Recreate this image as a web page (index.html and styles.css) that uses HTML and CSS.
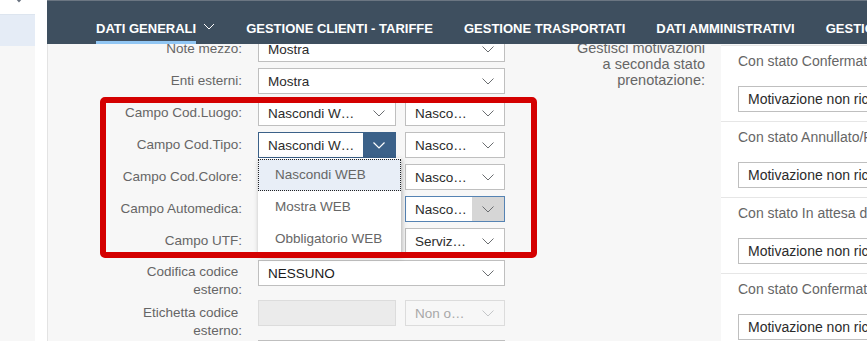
FILE: index.html
```html
<!DOCTYPE html>
<html lang="it">
<head>
<meta charset="utf-8">
<title>Dati generali</title>
<link rel="stylesheet" href="styles.css">
</head>
<body>
<div class="app">
  <aside class="side">
    <div class="side-top">
      <svg class="side-glyph" width="8" height="3" viewBox="0 0 8 3"><polyline points="1,-2 4,1.5 7,-2" fill="none" stroke="#6a7380" stroke-width="1.4"/></svg>
    </div>
    <div class="side-sel"></div>
  </aside>
  <div class="gutter"></div>
  <main class="main">
    <nav class="tabs">
      <div class="tab active">
        <span class="tab-label">DATI GENERALI</span>
        <svg class="tab-chev" width="12" height="7" viewBox="0 0 12 7"><polyline points="1,1 6,6 11,1" fill="none" stroke="#fff" stroke-width="1"/></svg>
      </div>
      <div class="tab"><span class="tab-label">GESTIONE CLIENTI - TARIFFE</span></div>
      <div class="tab"><span class="tab-label">GESTIONE TRASPORTATI</span></div>
      <div class="tab"><span class="tab-label">DATI AMMINISTRATIVI</span></div>
      <div class="tab"><span class="tab-label">GESTIONE</span></div>
    </nav>
    <section class="content">
      <div class="inner">
        <div class="form-left">
          <div class="row">
            <div class="label">Note mezzo:</div>
            <div class="fields">
              <div class="sel full"><span class="val">Mostra</span><span class="btn"><svg width="12" height="7" viewBox="0 0 12 7"><polyline points="0.5,0.5 6,6 11.5,0.5" fill="none" stroke="#6a6d70" stroke-width="1"/></svg></span></div>
            </div>
          </div>
          <div class="row">
            <div class="label">Enti esterni:</div>
            <div class="fields">
              <div class="sel full"><span class="val">Mostra</span><span class="btn"><svg width="12" height="7" viewBox="0 0 12 7"><polyline points="0.5,0.5 6,6 11.5,0.5" fill="none" stroke="#6a6d70" stroke-width="1"/></svg></span></div>
            </div>
          </div>
          <div class="row">
            <div class="label">Campo Cod.Luogo:</div>
            <div class="fields">
              <div class="sel first"><span class="val">Nascondi W…</span><span class="btn"><svg width="12" height="7" viewBox="0 0 12 7"><polyline points="0.5,0.5 6,6 11.5,0.5" fill="none" stroke="#6a6d70" stroke-width="1"/></svg></span></div>
              <div class="sel second"><span class="val">Nasco…</span><span class="btn"><svg width="12" height="7" viewBox="0 0 12 7"><polyline points="0.5,0.5 6,6 11.5,0.5" fill="none" stroke="#6a6d70" stroke-width="1"/></svg></span></div>
            </div>
          </div>
          <div class="row">
            <div class="label">Campo Cod.Tipo:</div>
            <div class="fields">
              <div class="drop">
                <div class="sel first focused"><span class="val">Nascondi W…</span><span class="btn"><svg width="12" height="7" viewBox="0 0 12 7"><polyline points="0.5,0.5 6,6 11.5,0.5" fill="none" stroke="#fff" stroke-width="1.2"/></svg></span></div>
                <ul class="list">
                  <li class="item selected">Nascondi WEB</li>
                  <li class="item">Mostra WEB</li>
                  <li class="item">Obbligatorio WEB</li>
                </ul>
              </div>
              <div class="sel second"><span class="val">Nasco…</span><span class="btn"><svg width="12" height="7" viewBox="0 0 12 7"><polyline points="0.5,0.5 6,6 11.5,0.5" fill="none" stroke="#6a6d70" stroke-width="1"/></svg></span></div>
            </div>
          </div>
          <div class="row">
            <div class="label">Campo Cod.Colore:</div>
            <div class="fields">
              <div class="sel first"><span class="val">Nascondi W…</span><span class="btn"><svg width="12" height="7" viewBox="0 0 12 7"><polyline points="0.5,0.5 6,6 11.5,0.5" fill="none" stroke="#6a6d70" stroke-width="1"/></svg></span></div>
              <div class="sel second"><span class="val">Nasco…</span><span class="btn"><svg width="12" height="7" viewBox="0 0 12 7"><polyline points="0.5,0.5 6,6 11.5,0.5" fill="none" stroke="#6a6d70" stroke-width="1"/></svg></span></div>
            </div>
          </div>
          <div class="row">
            <div class="label">Campo Automedica:</div>
            <div class="fields">
              <div class="sel first"><span class="val">Nascondi W…</span><span class="btn"><svg width="12" height="7" viewBox="0 0 12 7"><polyline points="0.5,0.5 6,6 11.5,0.5" fill="none" stroke="#6a6d70" stroke-width="1"/></svg></span></div>
              <div class="sel second hovered"><span class="val">Nasco…</span><span class="btn"><svg width="12" height="7" viewBox="0 0 12 7"><polyline points="0.5,0.5 6,6 11.5,0.5" fill="none" stroke="#6a6d70" stroke-width="1"/></svg></span></div>
            </div>
          </div>
          <div class="row">
            <div class="label">Campo UTF:</div>
            <div class="fields">
              <div class="sel first"><span class="val">Nascondi W…</span><span class="btn"><svg width="12" height="7" viewBox="0 0 12 7"><polyline points="0.5,0.5 6,6 11.5,0.5" fill="none" stroke="#6a6d70" stroke-width="1"/></svg></span></div>
              <div class="sel second"><span class="val">Serviz…</span><span class="btn"><svg width="12" height="7" viewBox="0 0 12 7"><polyline points="0.5,0.5 6,6 11.5,0.5" fill="none" stroke="#6a6d70" stroke-width="1"/></svg></span></div>
            </div>
          </div>
          <div class="row tall">
            <div class="label two">Codifica codice&nbsp;<br>esterno:</div>
            <div class="fields">
              <div class="sel full"><span class="val strong">NESSUNO</span><span class="btn"><svg width="12" height="7" viewBox="0 0 12 7"><polyline points="0.5,0.5 6,6 11.5,0.5" fill="none" stroke="#6a6d70" stroke-width="1"/></svg></span></div>
            </div>
          </div>
          <div class="row tall">
            <div class="label two b">Etichetta codice&nbsp;<br>esterno:</div>
            <div class="fields">
              <div class="input first disabled"></div>
              <div class="sel second disabled"><span class="val">Non o…</span><span class="btn"><svg width="12" height="7" viewBox="0 0 12 7"><polyline points="0.5,0.5 6,6 11.5,0.5" fill="none" stroke="#c4c6c8" stroke-width="1"/></svg></span></div>
            </div>
          </div>
          <div class="row">
            <div class="label">Descrizione:</div>
            <div class="fields">
              <div class="input full"></div>
            </div>
          </div>
        </div>

        <div class="form-right">
          <div class="r-label">Gestisci motivazioni<br>a seconda stato<br>prenotazione:</div>
          <div class="panel">
            <div class="sect">
              <div class="s-label">Con stato Confermato</div>
              <div class="sel wide"><span class="val">Motivazione non richiesta</span></div>
            </div>
            <div class="sect">
              <div class="s-label">Con stato Annullato/Rifiutato</div>
              <div class="sel wide"><span class="val">Motivazione non richiesta</span></div>
            </div>
            <div class="sect">
              <div class="s-label">Con stato In attesa di conferma</div>
              <div class="sel wide"><span class="val">Motivazione non richiesta</span></div>
            </div>
            <div class="sect">
              <div class="s-label">Con stato Confermato con riserva</div>
              <div class="sel wide"><span class="val">Motivazione non richiesta</span></div>
            </div>
          </div>
        </div>
      </div>
    </section>
  </main>
</div>
<div class="annot"></div>
</body>
</html>
```

FILE: styles.css
```css
html, body {
  margin: 0;
  padding: 0;
}
body {
  width: 867px;
  height: 341px;
  overflow: hidden;
  font-family: "Liberation Sans", Arial, sans-serif;
  font-size: 13.5px;
  background: #fff;
  position: relative;
}
.app {
  display: flex;
  height: 341px;
}
.side {
  width: 35px;
  flex-shrink: 0;
  background: #f7f7f7;
  display: flex;
  flex-direction: column;
}
.side-top {
  height: 14px;
  background: #fff;
}
.side-glyph {
  display: block;
  margin-left: 15px;
}
.side-sel {
  height: 32px;
  background: #e5ecf6;
  box-sizing: border-box;
  border-top: 1px solid #dde5ef;
}
.gutter {
  width: 12px;
  flex-shrink: 0;
  background: #fff;
}
.main {
  flex: 1;
  display: flex;
  flex-direction: column;
  min-width: 0;
}
.tabs {
  height: 44px;
  box-sizing: border-box;
  background: #3e4f5f;
  border-top: 1px solid #6b7682;
  display: flex;
  gap: 31px;
  padding-left: 49px;
  white-space: nowrap;
  overflow: hidden;
  flex-shrink: 0;
}
.tab {
  display: flex;
  align-items: stretch;
  gap: 7px;
  color: #fff;
  font-weight: bold;
  font-size: 13px;
}
.tab-label {
  display: flex;
  align-items: center;
  padding-top: 14px;
  box-sizing: border-box;
  border-bottom: 3px solid transparent;
}
.tab.active .tab-label {
  border-bottom-color: #91c6f3;
}
.tab-chev {
  align-self: center;
  margin-top: 8px;
}
.content {
  flex: 1;
  background: #f7f7f7;
  border-left: 1px solid #e3e3e3;
  overflow: hidden;
}
.inner {
  display: flex;
  margin-top: -8px;
}
.form-left {
  flex-shrink: 0;
  width: 457px;
}
.row {
  display: flex;
  height: 32px;
}
.row.tall {
  height: 40px;
}
.label {
  width: 194px;
  margin-right: 16px;
  flex-shrink: 0;
  text-align: right;
  color: #666;
  line-height: 18px;
  padding-top: 4px;
  box-sizing: border-box;
}
.label.two {
  padding-top: 3px;
}
.label.two.b {
  padding-top: 4px;
}
.fields {
  display: flex;
  gap: 9px;
  width: 247px;
}
.sel, .input {
  display: flex;
  align-items: center;
  height: 26px;
  box-sizing: border-box;
  border: 1px solid #bfbfbf;
  background: #fff;
  color: #2b2b2b;
}
.full { width: 247px; }
.first { width: 138px; }
.second { width: 100px; }
.val {
  flex: 1;
  padding-left: 9px;
  white-space: nowrap;
  overflow: hidden;
}
.val.strong { color: #1a1a1a; }
.btn {
  width: 32px;
  height: 100%;
  display: flex;
  align-items: center;
  justify-content: center;
  flex-shrink: 0;
}
.btn svg { display: block; margin-top: 1px; }
.sel.focused {
  border-color: #3b6189;
}
.sel.focused .btn {
  background: #3b6189;
}
.sel.hovered {
  border-color: #5583b3;
}
.sel.hovered .btn {
  background: #d6d6d6;
}
.disabled {
  background: #ebebeb;
  border-color: #dcdcdc;
}
.sel.disabled {
  background: #f7f7f7;
  color: #a8a8a8;
}
.drop {
  position: relative;
}
.list {
  position: absolute;
  top: 26px;
  left: 0;
  width: 143px;
  margin: 0;
  padding: 1px 0 0;
  list-style: none;
  background: #fff;
  box-shadow: 1px 2px 5px rgba(0, 0, 0, 0.3);
  z-index: 2;
}
.item {
  height: 32px;
  line-height: 32px;
  padding-left: 17px;
  color: #666;
  box-sizing: border-box;
}
.item.selected {
  background: #e8eef7;
  outline: 1px dotted #222;
  outline-offset: -1px;
}
.form-right {
  display: flex;
  margin-left: 16px;
  flex-shrink: 0;
  font-size: 14px;
}
.r-label {
  width: 184px;
  margin-right: 16px;
  text-align: right;
  color: #666;
  line-height: 16px;
  padding-top: 4px;
  flex-shrink: 0;
  font-size: 14.5px;
}
.panel {
  width: 300px;
  margin-top: 9px;
  background: #fff;
  border-top: 1px solid #e6e6e6;
}
.sect {
  padding: 6px 0 9px 17px;
  border-bottom: 1px solid #e6e6e6;
}
.s-label {
  color: #666;
  line-height: 18px;
  white-space: nowrap;
}
.sel.wide {
  width: 270px;
  margin-top: 16px;
}
.annot {
  position: absolute;
  left: 100px;
  top: 97px;
  width: 437px;
  height: 161px;
  box-sizing: border-box;
  border: 6px solid #d40000;
  border-radius: 5px;
  z-index: 5;
}
```
